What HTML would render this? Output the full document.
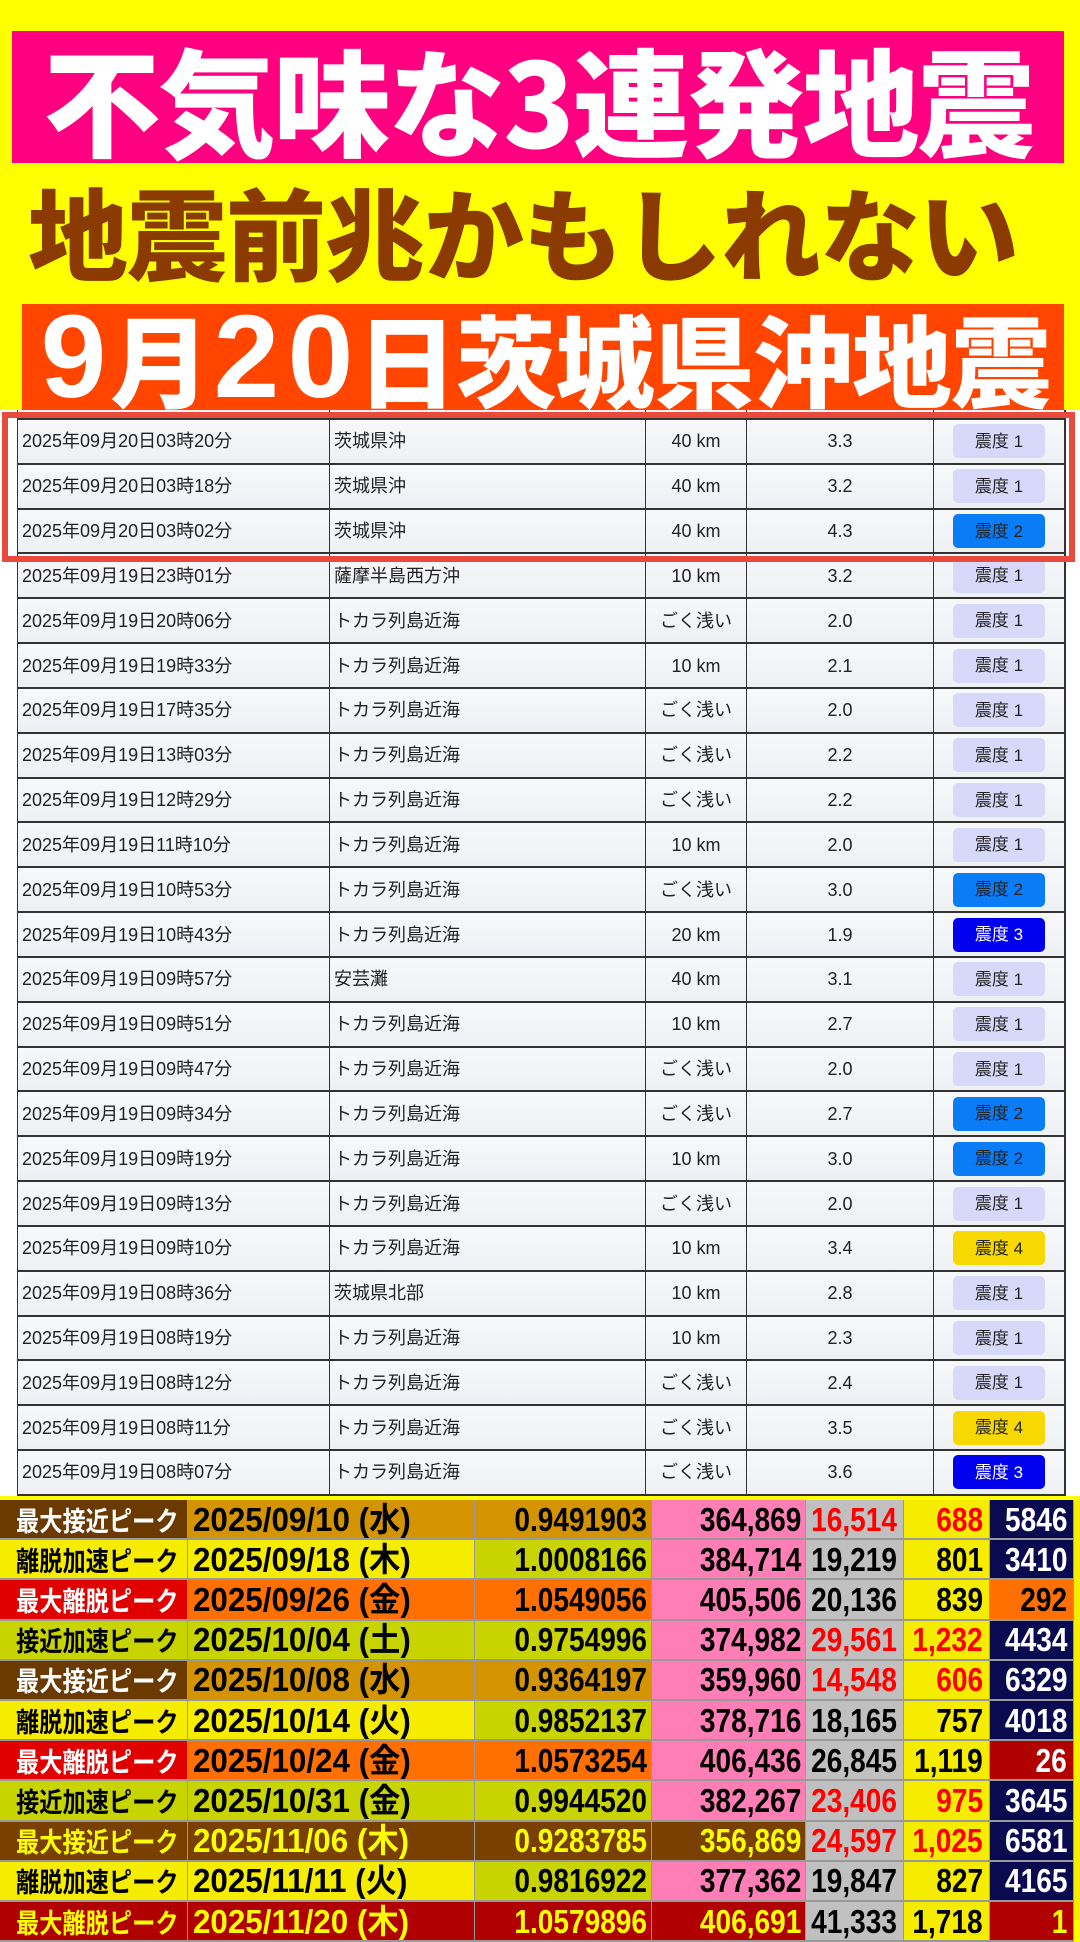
<!DOCTYPE html>
<html><head><meta charset="utf-8"><style>
*{margin:0;padding:0;box-sizing:border-box}
body{width:1080px;height:1920px;background:#ffff00;position:relative;overflow:hidden;font-family:"Liberation Sans","Noto Sans CJK JP",sans-serif}
.ban{position:absolute;display:flex;align-items:center;justify-content:center;font-family:"Noto Sans CJK JP",sans-serif;font-weight:900;white-space:nowrap;line-height:1}
#b1{left:12px;top:31px;width:1052px;height:132px;background:#ff0080;color:#fff;font-size:117px;letter-spacing:-2px}
#b2{left:28px;top:180px;width:1010px;height:100px;color:#8b3a00;font-size:100px;letter-spacing:-1px;justify-content:flex-start}
#b3{left:22px;top:304px;width:1042px;height:106px;background:#ff4500;color:#fff;font-size:100px;letter-spacing:-1px;overflow:hidden}
#b3 .d{display:inline-block;width:74px;text-align:center;font-size:118px;font-family:"Liberation Sans",sans-serif;font-weight:bold}
#tbl{position:absolute;left:0;top:410px;width:1080px;height:1090px;background:#fff;overflow:hidden}
.r{position:absolute;left:17px;width:1049px;height:44.83px;border-bottom:2px solid #333;background:linear-gradient(#f7f8fa,#eef0f4);font-size:18px;color:#222;line-height:1}
.r div{position:absolute;top:0;height:100%;display:flex;align-items:center;border-left:1.5px solid #333}
.c1{left:0;width:312px;padding-left:4px}
.c2{left:312px;width:316px;padding-left:4px}
.c3{left:628px;width:101px;justify-content:center}
.c4{left:729px;width:187px;justify-content:center}
.c5{left:916px;width:133px;justify-content:center;border-right:2px solid #333}
.c5 span{display:flex;align-items:center;justify-content:center;width:92px;height:34px;border-radius:5px;background:#d8d8fa;font-size:17px}
.s2{background:#0a7cf5!important}.s3{background:#0000ee!important;color:#fff}.s4{background:#f7d800!important}
#red{position:absolute;left:2px;top:412px;width:1073px;height:150px;border:6px solid #e84b3c}
#bt{position:absolute;left:0;top:1496px;width:1080px;height:424px;background:#f5ec00;border-top:4px solid #ff0}
.b{position:absolute;left:0;width:1074px;height:40.2px;border-bottom:2px solid #999}
.b div{position:absolute;top:0;height:100%;display:flex;align-items:center;font-size:33px;font-weight:bold;white-space:nowrap;overflow:hidden;border-right:1px solid #999;line-height:1}
.b div span{display:inline-block;transform:scaleX(.85)}
.x1{left:0;width:188px;padding-left:16px}
.x1 span{transform-origin:left;font-family:"Noto Sans CJK JP",sans-serif;font-size:27px;transform:scaleX(.86)!important}
.x2{left:188px;width:287px;padding-left:5px}.x2 span{transform-origin:left;transform:scaleX(.95)!important}
.x3{left:475px;width:177px;justify-content:flex-end;padding-right:4px}.x3 span{transform-origin:right}
.x4{left:652px;width:154px;justify-content:flex-end;padding-right:4px}.x4 span{transform-origin:right}
.x5{left:806px;width:98px;justify-content:flex-end;padding-right:6px}.x5 span{transform-origin:right}
.x6{left:904px;width:86px;justify-content:flex-end;padding-right:6px}.x6 span{transform-origin:right}
.x7{left:990px;width:84px;justify-content:flex-end;padding-right:6px}.x7 span{transform-origin:right}
</style></head><body>
<div class="ban" id="b1">不気味な3連発地震</div>
<div class="ban" id="b2">地震前兆かもしれない</div>
<div class="ban" id="b3"><span class="d">9</span>月<span class="d">2</span><span class="d">0</span>日茨城県沖地震</div>
<div id="tbl">
<div class="r" style="top:-35px"><div class="c1"></div><div class="c2"></div><div class="c3"></div><div class="c4"></div><div class="c5"></div></div>
<div class="r" style="top:10px"><div class="c1">2025年09月20日03時20分</div><div class="c2">茨城県沖</div><div class="c3">40 km</div><div class="c4">3.3</div><div class="c5"><span>震度 1</span></div></div>
<div class="r" style="top:54.83px"><div class="c1">2025年09月20日03時18分</div><div class="c2">茨城県沖</div><div class="c3">40 km</div><div class="c4">3.2</div><div class="c5"><span>震度 1</span></div></div>
<div class="r" style="top:99.66px"><div class="c1">2025年09月20日03時02分</div><div class="c2">茨城県沖</div><div class="c3">40 km</div><div class="c4">4.3</div><div class="c5"><span class="s2">震度 2</span></div></div>
<div class="r" style="top:144.49px"><div class="c1">2025年09月19日23時01分</div><div class="c2">薩摩半島西方沖</div><div class="c3">10 km</div><div class="c4">3.2</div><div class="c5"><span>震度 1</span></div></div>
<div class="r" style="top:189.32px"><div class="c1">2025年09月19日20時06分</div><div class="c2">トカラ列島近海</div><div class="c3">ごく浅い</div><div class="c4">2.0</div><div class="c5"><span>震度 1</span></div></div>
<div class="r" style="top:234.15px"><div class="c1">2025年09月19日19時33分</div><div class="c2">トカラ列島近海</div><div class="c3">10 km</div><div class="c4">2.1</div><div class="c5"><span>震度 1</span></div></div>
<div class="r" style="top:278.98px"><div class="c1">2025年09月19日17時35分</div><div class="c2">トカラ列島近海</div><div class="c3">ごく浅い</div><div class="c4">2.0</div><div class="c5"><span>震度 1</span></div></div>
<div class="r" style="top:323.81px"><div class="c1">2025年09月19日13時03分</div><div class="c2">トカラ列島近海</div><div class="c3">ごく浅い</div><div class="c4">2.2</div><div class="c5"><span>震度 1</span></div></div>
<div class="r" style="top:368.64px"><div class="c1">2025年09月19日12時29分</div><div class="c2">トカラ列島近海</div><div class="c3">ごく浅い</div><div class="c4">2.2</div><div class="c5"><span>震度 1</span></div></div>
<div class="r" style="top:413.47px"><div class="c1">2025年09月19日11時10分</div><div class="c2">トカラ列島近海</div><div class="c3">10 km</div><div class="c4">2.0</div><div class="c5"><span>震度 1</span></div></div>
<div class="r" style="top:458.3px"><div class="c1">2025年09月19日10時53分</div><div class="c2">トカラ列島近海</div><div class="c3">ごく浅い</div><div class="c4">3.0</div><div class="c5"><span class="s2">震度 2</span></div></div>
<div class="r" style="top:503.13px"><div class="c1">2025年09月19日10時43分</div><div class="c2">トカラ列島近海</div><div class="c3">20 km</div><div class="c4">1.9</div><div class="c5"><span class="s3">震度 3</span></div></div>
<div class="r" style="top:547.96px"><div class="c1">2025年09月19日09時57分</div><div class="c2">安芸灘</div><div class="c3">40 km</div><div class="c4">3.1</div><div class="c5"><span>震度 1</span></div></div>
<div class="r" style="top:592.79px"><div class="c1">2025年09月19日09時51分</div><div class="c2">トカラ列島近海</div><div class="c3">10 km</div><div class="c4">2.7</div><div class="c5"><span>震度 1</span></div></div>
<div class="r" style="top:637.62px"><div class="c1">2025年09月19日09時47分</div><div class="c2">トカラ列島近海</div><div class="c3">ごく浅い</div><div class="c4">2.0</div><div class="c5"><span>震度 1</span></div></div>
<div class="r" style="top:682.45px"><div class="c1">2025年09月19日09時34分</div><div class="c2">トカラ列島近海</div><div class="c3">ごく浅い</div><div class="c4">2.7</div><div class="c5"><span class="s2">震度 2</span></div></div>
<div class="r" style="top:727.28px"><div class="c1">2025年09月19日09時19分</div><div class="c2">トカラ列島近海</div><div class="c3">10 km</div><div class="c4">3.0</div><div class="c5"><span class="s2">震度 2</span></div></div>
<div class="r" style="top:772.11px"><div class="c1">2025年09月19日09時13分</div><div class="c2">トカラ列島近海</div><div class="c3">ごく浅い</div><div class="c4">2.0</div><div class="c5"><span>震度 1</span></div></div>
<div class="r" style="top:816.94px"><div class="c1">2025年09月19日09時10分</div><div class="c2">トカラ列島近海</div><div class="c3">10 km</div><div class="c4">3.4</div><div class="c5"><span class="s4">震度 4</span></div></div>
<div class="r" style="top:861.77px"><div class="c1">2025年09月19日08時36分</div><div class="c2">茨城県北部</div><div class="c3">10 km</div><div class="c4">2.8</div><div class="c5"><span>震度 1</span></div></div>
<div class="r" style="top:906.6px"><div class="c1">2025年09月19日08時19分</div><div class="c2">トカラ列島近海</div><div class="c3">10 km</div><div class="c4">2.3</div><div class="c5"><span>震度 1</span></div></div>
<div class="r" style="top:951.43px"><div class="c1">2025年09月19日08時12分</div><div class="c2">トカラ列島近海</div><div class="c3">ごく浅い</div><div class="c4">2.4</div><div class="c5"><span>震度 1</span></div></div>
<div class="r" style="top:996.26px"><div class="c1">2025年09月19日08時11分</div><div class="c2">トカラ列島近海</div><div class="c3">ごく浅い</div><div class="c4">3.5</div><div class="c5"><span class="s4">震度 4</span></div></div>
<div class="r" style="top:1041.09px"><div class="c1">2025年09月19日08時07分</div><div class="c2">トカラ列島近海</div><div class="c3">ごく浅い</div><div class="c4">3.6</div><div class="c5"><span class="s3">震度 3</span></div></div>
</div>
<div id="red"></div>
<div id="bt">
<div class="b" style="top:0"><div class="x1" style="background:#6b3a00;color:#fff"><span>最大接近ピーク</span></div><div class="x2" style="background:#d49400"><span>2025/09/10 (水)</span></div><div class="x3" style="background:#d49400"><span>0.9491903</span></div><div class="x4" style="background:#ff7eb6"><span>364,869</span></div><div class="x5" style="background:#c0c0c0;color:#f00"><span>16,514</span></div><div class="x6" style="background:#f5ec00;color:#f00"><span>688</span></div><div class="x7" style="background:#0a0a50;color:#fff"><span>5846</span></div></div>
<div class="b" style="top:40.2px"><div class="x1" style="background:#f5ec00"><span>離脱加速ピーク</span></div><div class="x2" style="background:#f5ec00"><span>2025/09/18 (木)</span></div><div class="x3" style="background:#c8d400"><span>1.0008166</span></div><div class="x4" style="background:#ff7eb6"><span>384,714</span></div><div class="x5" style="background:#c0c0c0"><span>19,219</span></div><div class="x6" style="background:#f5ec00"><span>801</span></div><div class="x7" style="background:#0a0a50;color:#fff"><span>3410</span></div></div>
<div class="b" style="top:80.4px"><div class="x1" style="background:#e00000;color:#fff"><span>最大離脱ピーク</span></div><div class="x2" style="background:#ff7000"><span>2025/09/26 (金)</span></div><div class="x3" style="background:#ff7000"><span>1.0549056</span></div><div class="x4" style="background:#ff7eb6"><span>405,506</span></div><div class="x5" style="background:#c0c0c0"><span>20,136</span></div><div class="x6" style="background:#f5ec00"><span>839</span></div><div class="x7" style="background:#ff7000"><span>292</span></div></div>
<div class="b" style="top:120.6px"><div class="x1" style="background:#c8d400"><span>接近加速ピーク</span></div><div class="x2" style="background:#c8d400"><span>2025/10/04 (土)</span></div><div class="x3" style="background:#c8d400"><span>0.9754996</span></div><div class="x4" style="background:#ff7eb6"><span>374,982</span></div><div class="x5" style="background:#c0c0c0;color:#f00"><span>29,561</span></div><div class="x6" style="background:#f5ec00;color:#f00"><span>1,232</span></div><div class="x7" style="background:#0a0a50;color:#fff"><span>4434</span></div></div>
<div class="b" style="top:160.8px"><div class="x1" style="background:#6b3a00;color:#fff"><span>最大接近ピーク</span></div><div class="x2" style="background:#d49400"><span>2025/10/08 (水)</span></div><div class="x3" style="background:#d49400"><span>0.9364197</span></div><div class="x4" style="background:#ff7eb6"><span>359,960</span></div><div class="x5" style="background:#c0c0c0;color:#f00"><span>14,548</span></div><div class="x6" style="background:#f5ec00;color:#f00"><span>606</span></div><div class="x7" style="background:#0a0a50;color:#fff"><span>6329</span></div></div>
<div class="b" style="top:201px"><div class="x1" style="background:#f5ec00"><span>離脱加速ピーク</span></div><div class="x2" style="background:#f5ec00"><span>2025/10/14 (火)</span></div><div class="x3" style="background:#c8d400"><span>0.9852137</span></div><div class="x4" style="background:#ff7eb6"><span>378,716</span></div><div class="x5" style="background:#c0c0c0"><span>18,165</span></div><div class="x6" style="background:#f5ec00"><span>757</span></div><div class="x7" style="background:#0a0a50;color:#fff"><span>4018</span></div></div>
<div class="b" style="top:241.2px"><div class="x1" style="background:#e00000;color:#fff"><span>最大離脱ピーク</span></div><div class="x2" style="background:#ff7000"><span>2025/10/24 (金)</span></div><div class="x3" style="background:#ff7000"><span>1.0573254</span></div><div class="x4" style="background:#ff7eb6"><span>406,436</span></div><div class="x5" style="background:#c0c0c0"><span>26,845</span></div><div class="x6" style="background:#f5ec00"><span>1,119</span></div><div class="x7" style="background:#b00000;color:#fff"><span>26</span></div></div>
<div class="b" style="top:281.4px"><div class="x1" style="background:#c8d400"><span>接近加速ピーク</span></div><div class="x2" style="background:#c8d400"><span>2025/10/31 (金)</span></div><div class="x3" style="background:#c8d400"><span>0.9944520</span></div><div class="x4" style="background:#ff7eb6"><span>382,267</span></div><div class="x5" style="background:#c0c0c0;color:#f00"><span>23,406</span></div><div class="x6" style="background:#f5ec00;color:#f00"><span>975</span></div><div class="x7" style="background:#0a0a50;color:#fff"><span>3645</span></div></div>
<div class="b" style="top:321.6px"><div class="x1" style="background:#7a4000;color:#ff0"><span>最大接近ピーク</span></div><div class="x2" style="background:#7a4000;color:#ff0"><span>2025/11/06 (木)</span></div><div class="x3" style="background:#7a4000;color:#ff0"><span>0.9283785</span></div><div class="x4" style="background:#7a4000;color:#ff0"><span>356,869</span></div><div class="x5" style="background:#c0c0c0;color:#f00"><span>24,597</span></div><div class="x6" style="background:#f5ec00;color:#f00"><span>1,025</span></div><div class="x7" style="background:#0a0a50;color:#fff"><span>6581</span></div></div>
<div class="b" style="top:361.8px"><div class="x1" style="background:#f5ec00"><span>離脱加速ピーク</span></div><div class="x2" style="background:#f5ec00"><span>2025/11/11 (火)</span></div><div class="x3" style="background:#c8d400"><span>0.9816922</span></div><div class="x4" style="background:#ff7eb6"><span>377,362</span></div><div class="x5" style="background:#c0c0c0"><span>19,847</span></div><div class="x6" style="background:#f5ec00"><span>827</span></div><div class="x7" style="background:#0a0a50;color:#fff"><span>4165</span></div></div>
<div class="b" style="top:402px"><div class="x1" style="background:#b00000;color:#ff0"><span>最大離脱ピーク</span></div><div class="x2" style="background:#b00000;color:#ff0"><span>2025/11/20 (木)</span></div><div class="x3" style="background:#b00000;color:#ff0"><span>1.0579896</span></div><div class="x4" style="background:#b00000;color:#ff0"><span>406,691</span></div><div class="x5" style="background:#c0c0c0"><span>41,333</span></div><div class="x6" style="background:#f5ec00"><span>1,718</span></div><div class="x7" style="background:#b00000;color:#ff0"><span>1</span></div></div>
</div>
</body></html>
